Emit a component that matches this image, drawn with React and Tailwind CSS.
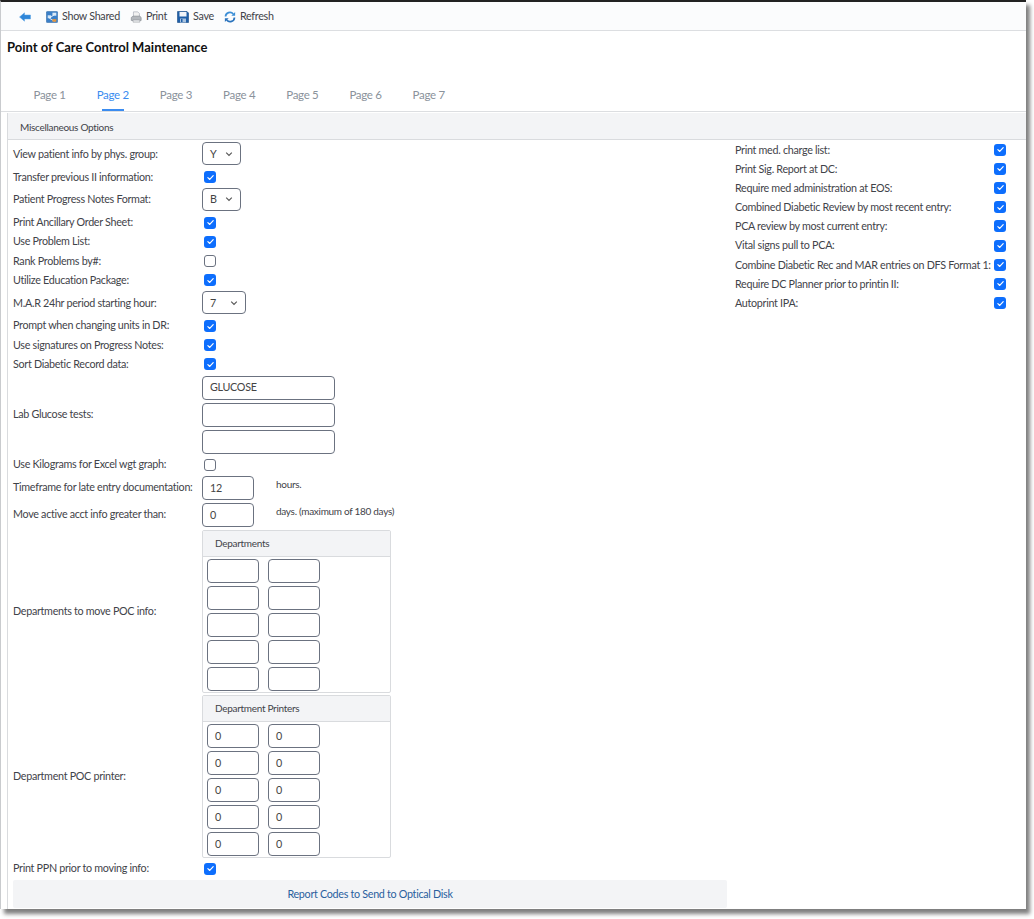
import React from "react";

function Check({ on = true }) {
  if (!on) return <span className="block w-[12px] h-[12px] rounded-[3px] border border-[#6b7280] bg-white" />;
  return (
    <span className="flex items-center justify-center w-[12px] h-[12px] rounded-[3px] bg-[#0d6efd]">
      <svg viewBox="0 0 12 12" className="w-[9px] h-[9px]" fill="none" stroke="#fff" strokeWidth="1.6" strokeLinecap="round" strokeLinejoin="round"><path d="M2.5 6.2 5 8.6 9.6 3.6" /></svg>
    </span>
  );
}

function Sel({ v, w = "w-[39px]" }) {
  return (
    <div className={`${w} h-[23px] -mt-[1px] rounded-[4px] border border-[#6b7280] bg-white flex items-center justify-between pl-[7px] pr-[7px] text-[#444]`}>
      <span>{v}</span>
      <svg viewBox="0 0 10 10" className="w-[8px] h-[8px]" fill="none" stroke="#555" strokeWidth="1.4"><path d="M1.5 3.2 5 6.8 8.5 3.2" /></svg>
    </div>
  );
}

function Inp({ v = "", w = "w-[52px]" }) {
  return <div className={`${w} h-[24px] rounded-[4px] border border-[#6b7280] bg-white flex items-center pl-[7px] text-[#444]`}>{v}</div>;
}

function Row({ label, children, h = "h-[19.2px]" }) {
  return (
    <div className={`flex items-center ${h}`}>
      <div className="w-[189px] shrink-0 whitespace-nowrap -mt-[1px]">{label}</div>
      {children}
    </div>
  );
}

function CheckRow({ label, on = true }) {
  return (
    <Row label={label}><div className="ml-[2px]"><Check on={on} /></div></Row>
  );
}

function SelRow({ label, v, w }) {
  return <Row label={label} h="h-[26.5px]"><Sel v={v} w={w} /></Row>;
}

function GridBox({ title, vals }) {
  const rows = [0, 1, 2, 3, 4];
  return (
    <div className="w-[189px] h-[163px] border border-[#d9dbde] rounded-[2px] bg-white">
      <div className="h-[26px] bg-[#f3f4f6] border-b border-[#d9dbde] flex items-center pl-[12px] text-[10px]">{title}</div>
      <div className="flex flex-col gap-[3px] pt-[2px] pl-[4px]">
        {rows.map((r) => (
          <div key={r} className="flex gap-[9px]">
            <Inp v={vals} />
            <Inp v={vals} />
          </div>
        ))}
      </div>
    </div>
  );
}

function Tb({ icon, label }) {
  return (
    <div className="flex items-center gap-[4px]">
      {icon}
      <span>{label}</span>
    </div>
  );
}

const IconBack = (
  <svg viewBox="0 0 12 10" className="w-[12px] h-[10px]">
    <path d="M0.5 5 5.5 0.8V3H11.5V7H5.5V9.2Z" fill="#2f86d8" stroke="#5aa5e6" strokeWidth="0.5" />
  </svg>
);
const IconShared = (
  <svg viewBox="0 0 14 14" className="w-[12px] h-[12px]">
    <rect x="0.5" y="0.5" width="13" height="13" rx="1" fill="#3a7fc8" stroke="#24609f" strokeWidth="0.6" />
    <rect x="7.5" y="2" width="4.5" height="3.5" fill="#dbe9f6" />
    <rect x="2" y="5" width="4" height="3.5" fill="#cfe3f5" />
    <path d="M4 8.5 10 12M4 8 9 5" stroke="#fff" strokeWidth="0.9" />
    <rect x="7.5" y="9.5" width="4.5" height="3" fill="#e8963a" />
  </svg>
);
const IconPrint = (
  <svg viewBox="0 0 14 14" className="w-[12px] h-[12px]">
    <path d="M4 1h5l2 2v4H4Z" fill="#f2f2f2" stroke="#9ca3af" strokeWidth="0.7" />
    <path d="M1.5 7.5 3.5 6h8l1.5 1.5V11H1.5Z" fill="#b4b8bd" stroke="#7d838a" strokeWidth="0.7" />
    <path d="M3.5 10.5h8V13h-8Z" fill="#eceef0" stroke="#8b9096" strokeWidth="0.6" />
  </svg>
);
const IconSave = (
  <svg viewBox="0 0 12 12" className="w-[12px] h-[12px]">
    <path d="M0.5 0.5h9.5l1.5 1.5v9.5h-11Z" fill="#1f5fa8" stroke="#174a85" strokeWidth="0.6" />
    <rect x="2.5" y="1" width="7" height="4.5" fill="#f2f5f9" />
    <rect x="3" y="7.5" width="6" height="4" fill="#a9c3df" />
    <rect x="4" y="8" width="1.5" height="3" fill="#1f5fa8" />
  </svg>
);
const IconRefresh = (
  <svg viewBox="0 0 14 14" className="w-[12px] h-[12px]" fill="none">
    <path d="M1.8 6.5A5 5 0 0 1 10.8 3.6" stroke="#3d8fd6" strokeWidth="2" />
    <path d="M8.5 5.5h4.5V1.2Z" fill="#3d8fd6" />
    <path d="M12.2 7.5A5 5 0 0 1 3.2 10.4" stroke="#2a73bd" strokeWidth="2" />
    <path d="M5.5 8.5H1v4.3Z" fill="#2a73bd" />
  </svg>
);

const right = [
  "Print med. charge list:",
  "Print Sig. Report at DC:",
  "Require med administration at EOS:",
  "Combined Diabetic Review by most recent entry:",
  "PCA review by most current entry:",
  "Vital signs pull to PCA:",
  "Combine Diabetic Rec and MAR entries on DFS Format 1:",
  "Require DC Planner prior to printin II:",
  "Autoprint IPA:",
];

export default function App() {
  return (
    <div className="w-[1034px] h-[919px] bg-white overflow-hidden text-[10.75px] tracking-[-0.3px] text-[#3f4349] font-['Lato',sans-serif]">
      <div className="w-[1026px] h-[909px] bg-white border-t-2 border-t-[#222] border-l border-l-[#c9cbce] shadow-[4px_5px_4px_rgba(0,0,0,0.5)] flex flex-col">
        <div className="h-[29px] shrink-0 flex items-center gap-[10px] pl-[18px] pt-[1px] bg-[#fbfcfd] border-b border-[#dcdee1]">
          <div className="mr-[5px]">{IconBack}</div>
          <Tb icon={IconShared} label="Show Shared" />
          <Tb icon={IconPrint} label="Print" />
          <Tb icon={IconSave} label="Save" />
          <Tb icon={IconRefresh} label="Refresh" />
        </div>
        <div className="h-[31px] pl-[6px] pt-[7px] text-[13px] tracking-normal font-bold text-[#111]">Point of Care Control Maintenance</div>
        <div className="h-[50px] shrink-0 flex items-end pl-[17px] border-b border-[#dcdee1] text-[11.5px] text-[#8a929b]">
          {[1, 2, 3, 4, 5, 6, 7].map((n) => (
            <div key={n} className={`w-[63.2px] h-[25px] flex flex-col items-center justify-between ${n === 2 ? "text-[#3b8cf0]" : ""}`}>
              <div>Page {n}</div>
              {n === 2 ? <div className="w-[22px] h-[2px] bg-[#3b8cf0]" /> : null}
            </div>
          ))}
        </div>
        <div className="ml-[6px] mt-[1px] flex-1 flex flex-col border-l border-[#d9dbde]">
          <div className="h-[27px] shrink-0 bg-[#f3f4f6] border-b border-[#d9dbde] flex items-center pl-[12px] pt-[2px] text-[10px]">Miscellaneous Options</div>
          <div className="flex flex-1 pl-[5px]">
            <div className="w-[714px] shrink-0 flex flex-col pt-[1px]">
              <SelRow label="View patient info by phys. group:" v="Y" />
              <CheckRow label="Transfer previous II information:" />
              <SelRow label="Patient Progress Notes Format:" v="B" />
              <CheckRow label="Print Ancillary Order Sheet:" />
              <CheckRow label="Use Problem List:" />
              <CheckRow label="Rank Problems by#:" on={false} />
              <CheckRow label="Utilize Education Package:" />
              <SelRow label="M.A.R 24hr period starting hour:" v="7" w="w-[44px]" />
              <CheckRow label="Prompt when changing units in DR:" />
              <CheckRow label="Use signatures on Progress Notes:" />
              <CheckRow label="Sort Diabetic Record data:" />
              <Row label="Lab Glucose tests:" h="h-[81px]">
                <div className="flex flex-col gap-[3px]">
                  <Inp v="GLUCOSE" w="w-[133px]" />
                  <Inp w="w-[133px]" />
                  <Inp w="w-[133px]" />
                </div>
              </Row>
              <CheckRow label="Use Kilograms for Excel wgt graph:" on={false} />
              <Row label="Timeframe for late entry documentation:" h="h-[27px]">
                <Inp v="12" />
                <span className="ml-[22px] -mt-[7px] text-[10px]">hours.</span>
              </Row>
              <Row label="Move active acct info greater than:" h="h-[27px]">
                <Inp v="0" />
                <span className="ml-[22px] -mt-[7px] text-[10px]">days. (maximum of 180 days)</span>
              </Row>
              <div className="mt-[1px]">
                <Row label="Departments to move POC info:" h="h-[165px]">
                  <GridBox title="Departments" vals="" />
                </Row>
              </div>
              <Row label="Department POC printer:" h="h-[165px]">
                <GridBox title="Department Printers" vals="0" />
              </Row>
              <CheckRow label="Print PPN prior to moving info:" />
              <div className="mt-[2px] h-[28px] bg-[#f3f4f6] rounded-[2px] flex items-center justify-center text-[#2a5f9e]">Report Codes to Send to Optical Disk</div>
            </div>
            <div className="w-[271px] flex flex-col ml-[8px]">
              {right.map((t) => (
                <div key={t} className="flex items-center justify-between h-[19.2px]">
                  <span className="whitespace-nowrap">{t}</span>
                  <Check />
                </div>
              ))}
            </div>
          </div>
        </div>
      </div>
    </div>
  );
}
